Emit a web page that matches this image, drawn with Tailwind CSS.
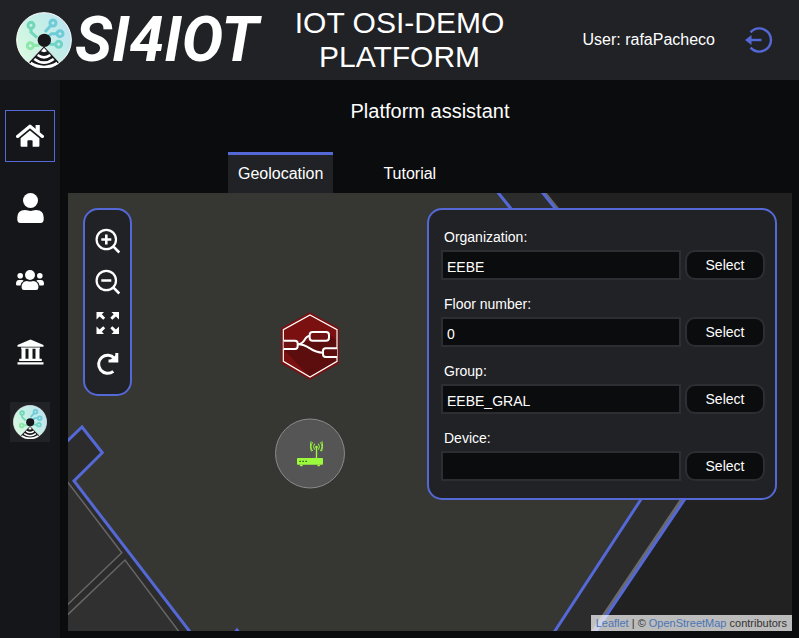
<!DOCTYPE html>
<html lang="en">
<head>
<meta charset="utf-8">
<meta name="viewport" content="width=device-width, initial-scale=1">
<title>IOT OSI-DEMO PLATFORM</title>
<script src="https://cdn.jsdelivr.net/npm/@tailwindcss/browser@4"></script>
</head>
<body class="flex min-h-screen flex-col bg-[#0b0c0e] font-['Liberation_Sans',Arial,sans-serif] text-white">

<svg class="absolute size-0" aria-hidden="true">
  <defs>
    <linearGradient id="disc" x1="0" y1="0.8" x2="1" y2="0.2">
      <stop offset="0" stop-color="#dcfbe0"/><stop offset="0.5" stop-color="#c6f0e6"/><stop offset="1" stop-color="#bce3f2"/>
    </linearGradient>
    <symbol id="brand" viewBox="48 36 168 168">
      <circle cx="132" cy="120" r="82" fill="url(#disc)" stroke="#fff" stroke-width="3"/>
      <g fill="none" stroke-width="9">
        <g stroke="#72d6b8"><circle cx="93" cy="76" r="9"/><path d="M93 85v11l18 17"/></g>
        <g stroke="#8be8a8"><circle cx="91" cy="137" r="9"/><path d="M100 136h18"/></g>
        <g stroke="#6fcbd6"><circle cx="159" cy="69" r="9"/><path d="M153 76l-18 20"/><circle cx="180" cy="101" r="9"/><path d="M171 101h-16l-12 9"/></g>
        <g stroke="#70d3c6"><circle cx="176" cy="133" r="9"/><path d="M167 133h-18"/></g>
      </g>
      <path d="M132 138L86 187a67 67 0 0 0 92 0z" fill="#17181b" stroke="#fff" stroke-width="2"/>
      <circle cx="133" cy="121" r="20" fill="#17181b"/>
      <path d="M132 143l-9 11q9 5 18 0z" fill="#fff"/>
      <g fill="none" stroke="#fff" stroke-width="8"><path d="M113 165q19 14 38 0"/><path d="M103 177q29 22 58 0"/><path d="M92 189q40 24 80 0"/></g>
    </symbol>
  </defs>
</svg>

<header class="grid h-20 grid-cols-[1fr_240px_1fr] items-center bg-[#202226]">
  <a href="#" class="flex items-center pl-4" aria-label="SI4IOT">
    <svg class="size-14 shrink-0"><use href="#brand"/></svg>
    <span class="pl-[3px] font-[Roboto,sans-serif] text-[62px] leading-[76px] font-bold italic">SI4IOT</span>
  </a>
  <h1 class="text-center text-[30px] leading-[34px]">IOT OSI-DEMO PLATFORM</h1>
  <div class="flex items-center justify-end gap-[30px] pr-[25px]">
    <span class="text-base">User: rafaPacheco</span>
    <button type="button" aria-label="Log out" class="cursor-pointer">
      <svg class="h-7 w-[29px]" viewBox="0 0 29 28" fill="none" stroke="#5468d6" stroke-width="2.4"><path d="M5.600 6.400a11.600 11.600 0 1 1 0 15.200"/><path d="M16.500 14H5"/><path d="M0 14l6.500-5v10z" fill="#5468d6" stroke="none"/></svg>
    </button>
  </div>
</header>

<div class="flex flex-1">
  <nav class="flex w-[60px] shrink-0 flex-col items-center gap-5 bg-[#15161a] pt-[30px]">
    <a href="#" aria-label="Home" class="flex h-[52px] w-[50px] items-center justify-center border border-[#5468d6]">
      <svg class="h-6 w-7" viewBox="0 0 28 24" fill="#fff"><path d="M1.600 12.400L14 2.200l12.400 10.200" fill="none" stroke="#fff" stroke-width="3.200" stroke-linecap="round" stroke-linejoin="round"/><path d="M19.600 1h4.200v8l-4.200-3.600zM14 6.400l9.400 7.800v7.600q0 .9-.9.9H16.600v-5.600q0-.9-.9-.9h-3.400q-.9 0-.9.900v5.600H5.500q-.9 0-.9-.9v-7.600z"/></svg>
    </a>
    <a href="#" aria-label="User" class="flex h-[52px] w-[50px] items-center justify-center">
      <svg class="h-[30px] w-[27px]" viewBox="0 0 27 30" fill="#fff"><circle cx="13.500" cy="7.500" r="7.500"/><path d="M.3 26v-1.500q0-7.500 7.700-7.500 2 0 3 .5 2.500.8 5 0 1-.5 3-.5 7.700 0 7.700 7.500V26q0 4-3 4h-20.400q-3 0-3-4z"/></svg>
    </a>
    <a href="#" aria-label="Groups" class="flex h-[52px] w-[50px] items-center justify-center">
      <svg class="h-5 w-7" viewBox="0 0 28 20" fill="#fff"><circle cx="14" cy="5" r="5"/><circle cx="4.200" cy="5.800" r="2.800"/><circle cx="23.800" cy="5.800" r="2.800"/><path d="M5.600 17.500q0-6.500 5.400-6.500 3 1.200 6 0 5.400 0 5.400 6.500 0 2.500-2.400 2.500H8q-2.400 0-2.400-2.500zM0 14q0-4 3-4h3q1 0 1.700.7Q4.900 12.400 4.500 15.600H1.400Q0 15.600 0 14zM28 14q0-4-3-4h-3q-1 0-1.700.7 2.800 1.700 3.200 4.900h3.100Q28 15.600 28 14z"/></svg>
    </a>
    <a href="#" aria-label="Organizations" class="flex h-[52px] w-[50px] items-center justify-center">
      <svg class="h-[26px] w-[27px]" viewBox="0 0 27 26" fill="#fff"><path d="M13.500.5L26.500 6v1.800H.5V6zM4 8.500h19v1.200H4zM4.500 9h4v11h-4zM11.500 9h4v11h-4zM18.500 9h4v11h-4zM2.200 19.800h22.600v2.200H2.200zM.5 23.200h26v2.300H.5z"/></svg>
    </a>
    <a href="#" aria-label="Platform assistant" class="flex h-12 w-[50px] items-center justify-center">
      <span class="flex size-10 items-center justify-center bg-[#202226]"><svg class="size-[34px]"><use href="#brand"/></svg></span>
    </a>
  </nav>

  <main class="flex min-w-0 flex-1 flex-col pr-[7px] pb-[7px] pl-2">
    <h2 class="pt-[17px] text-center text-xl leading-7">Platform assistant</h2>
    <div role="tablist" class="mt-[27px] flex gap-10 pl-40">
      <button type="button" role="tab" aria-selected="true" class="h-[41px] border-t-3 border-[#5468d6] bg-[#202226] px-2.5 text-base">Geolocation</button>
      <button type="button" role="tab" aria-selected="false" class="h-[41px] border-t-3 border-transparent px-2.5 text-base">Tutorial</button>
    </div>

    <section aria-label="Map" class="relative min-h-[400px] flex-1 overflow-hidden bg-[#212121]">
      <svg class="absolute inset-0 size-full" viewBox="68 193 724 438" preserveAspectRatio="xMidYMid slice">
        <path d="M60 185H536.500L732 429L592 637H60z" fill="#2c2c2c"/>
        <path d="M538.500 185L735 430" fill="none" stroke="#66655f" stroke-width="3"/>
        <path d="M729 429L589 637" fill="none" stroke="#6a6a6a" stroke-width="3"/>
        <path d="M536.500 185L732 429L592 637" fill="none" stroke="#5468d6" stroke-width="3"/>
        <path d="M60 448L82 427L102.300 452.700L74 481L194 637H232L237 630L242 637H551L687 429L492 185H60z" fill="#363633" stroke="#5468d6" stroke-width="3"/>
        <g fill="#303030" stroke="#666" stroke-width="1.500">
          <path d="M60 472L121.800 552.700L60 612z"/>
          <path d="M60 622L125 560L183 637H60z"/>
        </g>
        <g transform="translate(265 300) scale(.33333)">
          <path d="M135 37L222 84V190L135 239L48 190V84z" fill="#7a1010"/>
          <path d="M190 98L216 124V184L135 231L58 150L100 136L120 124L150 124z" fill="#5c0d0d"/>
          <path d="M135 45L216 89V184L135 231L55 184V89z" fill="none" stroke="#fff" stroke-width="3.500"/>
          <g fill="#711010" stroke="#fff" stroke-width="6">
            <path d="M98 133c26 0 16-26 38-26M98 133c38 0 36 25 76 25" fill="none"/>
            <path d="M56 122H90q8 0 8 8v9q0 8-8 8H56"/>
            <rect x="134" y="96" width="58" height="26" rx="9"/>
            <path d="M216 145H182q-8 0-8 8v10q0 8 8 8h34" fill="#5c0d0d"/>
          </g>
        </g>
        <circle cx="310" cy="453.500" r="34.500" fill="#555" stroke="#8a8a8a"/>
        <g transform="translate(265 300) scale(.33333)" fill="#9bfa3c">
          <rect x="96" y="474" width="78" height="20" rx="2"/>
          <path d="M104 494h10l-2 5h-6zM156 494h10l-2 5h-6zM152.500 444h4v31h-4z"/><circle cx="154.500" cy="441" r="4"/>
          <g fill="none" stroke="#9bfa3c" stroke-width="3"><path d="M149 431q-7 9 0 18M143 427q-10 13 0 26M138 424q-4 15 1 30M160 431q7 9 0 18M166 427q10 13 0 26M171 424q4 15-1 30"/></g>
          <path d="M103 482h5v4h-5zM112 482h5v4h-5zM121 482h5v4h-5z" fill="#3d6b1c"/>
        </g>
      </svg>

      <div role="toolbar" aria-label="Map tools" class="absolute top-[15px] left-[15px] flex w-[49px] flex-col items-center gap-[15px] rounded-[15px] border-2 border-[#5468d6] bg-[#202226] pt-[18px] pb-[17px]">
        <button type="button" aria-label="Zoom in"><svg class="size-[26px]" viewBox="0 0 26 26" fill="none" stroke="#fff" stroke-width="2.200"><circle cx="11.300" cy="11.500" r="9.700"/><path d="M18 18.200L24.300 24.500M11.300 6.500v10M6.300 11.500h10" stroke-width="2.600"/></svg></button>
        <button type="button" aria-label="Zoom out"><svg class="size-[26px]" viewBox="0 0 26 26" fill="none" stroke="#fff" stroke-width="2.200"><circle cx="11.300" cy="11.500" r="9.700"/><path d="M18 18.200L24.300 24.500M6.300 11.500h10" stroke-width="2.600"/></svg></button>
        <button type="button" aria-label="Fit map"><svg class="size-[26px]" viewBox="0 0 26 26" fill="#fff"><g id="arrow"><path d="M1.500 2h7.500L6.800 4.200l3.400 3.600-2 2-3.600-3.400L1.500 9.500z"/></g><use href="#arrow" transform="matrix(-1 0 0 1 25.500 0)"/><use href="#arrow" transform="matrix(1 0 0 -1 0 26)"/><use href="#arrow" transform="matrix(-1 0 0 -1 25.500 26)"/></svg></button>
        <button type="button" aria-label="Reload map"><svg class="size-[26px]" viewBox="0 0 26 26" fill="none" stroke="#fff"><path d="M19.500 7.500A9 9 0 1 0 18.300 20.300" stroke-width="3"/><path d="M21.800 2v8H13.500" stroke-width="3"/><path d="M14.500 9.500l7-6v6z" fill="#fff" stroke="none"/></svg></button>
      </div>

      <form class="absolute top-[15px] right-[15px] flex w-[350px] flex-col gap-3.5 rounded-[15px] border-2 border-[#5468d6] bg-[#202226] py-[17px] pr-2.5 pl-3 text-sm">
        <div class="flex flex-col gap-[3px]">
          <label for="org" class="pl-[3px] leading-5">Organization:</label>
          <div class="flex gap-1">
            <input id="org" type="text" value="EEBE" class="h-[30px] min-w-0 flex-1 border-2 border-[#2d2e31] bg-[#0b0c0e] px-1 pt-1">
            <button type="button" class="h-[30px] w-20 rounded-[10px] border-2 border-[#2d2e31] bg-[#0b0c0e]">Select</button>
          </div>
        </div>
        <div class="flex flex-col gap-[3px]">
          <label for="floor" class="pl-[3px] leading-5">Floor number:</label>
          <div class="flex gap-1">
            <input id="floor" type="text" value="0" class="h-[30px] min-w-0 flex-1 border-2 border-[#2d2e31] bg-[#0b0c0e] px-1 pt-1">
            <button type="button" class="h-[30px] w-20 rounded-[10px] border-2 border-[#2d2e31] bg-[#0b0c0e]">Select</button>
          </div>
        </div>
        <div class="flex flex-col gap-[3px]">
          <label for="group" class="pl-[3px] leading-5">Group:</label>
          <div class="flex gap-1">
            <input id="group" type="text" value="EEBE_GRAL" class="h-[30px] min-w-0 flex-1 border-2 border-[#2d2e31] bg-[#0b0c0e] px-1 pt-1">
            <button type="button" class="h-[30px] w-20 rounded-[10px] border-2 border-[#2d2e31] bg-[#0b0c0e]">Select</button>
          </div>
        </div>
        <div class="flex flex-col gap-[3px]">
          <label for="device" class="pl-[3px] leading-5">Device:</label>
          <div class="flex gap-1">
            <input id="device" type="text" value="" class="h-[30px] min-w-0 flex-1 border-2 border-[#2d2e31] bg-[#0b0c0e] px-1 pt-1">
            <button type="button" class="h-[30px] w-20 rounded-[10px] border-2 border-[#2d2e31] bg-[#0b0c0e]">Select</button>
          </div>
        </div>
      </form>

      <p class="absolute right-0 bottom-0 bg-white/70 px-[5px] text-[11px] leading-4 text-[#333]"><a href="#" class="text-[#4a75b5]">Leaflet</a> | © <a href="#" class="text-[#4a75b5]">OpenStreetMap</a> contributors</p>
    </section>
  </main>
</div>
</body>
</html>
